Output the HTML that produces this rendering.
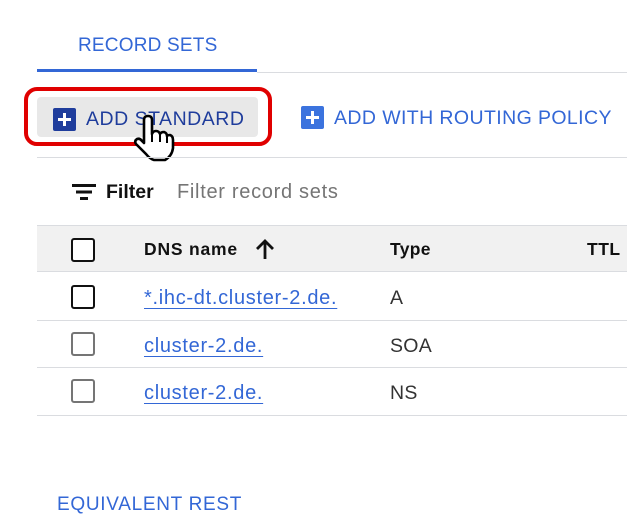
<!DOCTYPE html>
<html><head><meta charset="utf-8"><style>
*{margin:0;padding:0;box-sizing:border-box}
body{width:627px;height:520px;background:#fff;position:relative;overflow:hidden;font-family:"Liberation Sans",Arial,sans-serif}
.a{position:absolute;white-space:nowrap}
.blue{color:#3367d6}
.hl{position:absolute;height:1px;background:#dadce0}
.cb{position:absolute;width:24px;height:24px;border:2.5px solid #111;border-radius:3px;background:#fff}
.cb.g{border-color:#757575}
.lnk{color:#3367d6;text-decoration:underline;text-underline-offset:4px;text-decoration-thickness:1px;font-size:20px;letter-spacing:0.7px}
.t{font-size:19.5px;color:#333;letter-spacing:0.3px}
.plus{position:absolute;width:23px;height:23px;border-radius:2px}
.plus:before{content:"";position:absolute;left:5px;top:10px;width:13px;height:3px;background:#fff}
.plus:after{content:"";position:absolute;left:10px;top:5px;width:3px;height:13px;background:#fff}
</style></head><body>
<div class="a blue" style="left:78px;top:35px;font-size:19px;letter-spacing:0.2px">RECORD SETS</div>
<div class="a" style="left:37px;top:69px;width:220px;height:3px;background:#3367d6"></div>
<div class="hl" style="left:257px;top:72px;width:370px"></div>

<div class="a" style="left:24px;top:87px;width:248px;height:59px;border:4px solid #e00000;border-radius:13px"></div>
<div class="a" style="left:37px;top:97px;width:221px;height:40px;background:#e8e8e8;border-radius:4px"></div>
<div class="plus" style="left:53px;top:108px;background:#1f3d9c"></div>
<div class="a" style="left:86px;top:108px;font-size:19.5px;color:#1f3d9c;letter-spacing:0.5px">ADD STANDARD</div>

<div class="plus" style="left:301px;top:106px;background:#3b73de"></div>
<div class="a blue" style="left:334px;top:107px;font-size:19.5px;letter-spacing:0.4px">ADD WITH ROUTING POLICY</div>

<svg class="a" style="left:128px;top:114px" width="50" height="50" viewBox="0 0 50 50">
<path d="M16 6 Q16 2 20 2 Q24 2 24 6 L24 20 Q25 17 28 17 Q31 17 32 20 Q33 18 36 18 Q39 19 39 22 Q40 21 42 21 Q45 22 45 26 L45 34 Q44 42 37 46 L26 46 Q22 45 18 40 L8 30 Q6 27 9 25 Q12 24 14 27 L16 29 Z" fill="#fff" stroke="#000" stroke-width="2.6" stroke-linejoin="round"/>
<path d="M24 20 L24 28 M32 20 L32 28 M39 22 L39 29" stroke="#000" stroke-width="2"/>
</svg>

<div class="hl" style="left:37px;top:157px;width:590px"></div>

<svg class="a" style="left:72px;top:183px" width="24" height="18"><rect x="0" y="1" width="24" height="3" fill="#111"/><rect x="4" y="7.5" width="16" height="3" fill="#111"/><rect x="8" y="14" width="8" height="3" fill="#111"/></svg>
<div class="a" style="left:106px;top:181px;font-size:19.5px;font-weight:bold;color:#111">Filter</div>
<div class="a" style="left:177px;top:181px;font-size:20px;color:#757575;letter-spacing:0.7px">Filter record sets</div>

<div class="a" style="left:37px;top:225px;width:590px;height:47px;background:#f1f1f1;border-top:1px solid #dadce0;border-bottom:1px solid #dadce0"></div>
<div class="cb" style="left:71px;top:238px"></div>
<div class="a" style="left:144px;top:239px;font-size:17.5px;font-weight:bold;color:#111;letter-spacing:0.8px">DNS name</div>
<svg class="a" style="left:255px;top:238px" width="20" height="22"><path d="M10 21 V3 M2 11 L10 3 L18 11" stroke="#111" stroke-width="2.8" fill="none"/></svg>
<div class="a" style="left:390px;top:239px;font-size:17.5px;font-weight:bold;color:#111;letter-spacing:0.3px">Type</div>
<div class="a" style="left:587px;top:239px;font-size:17.5px;font-weight:bold;color:#111;letter-spacing:0.5px">TTL</div>

<div class="cb" style="left:71px;top:285px"></div>
<div class="a lnk" style="left:144px;top:287px">*.ihc-dt.cluster-2.de.</div>
<div class="a t" style="left:390px;top:287px">A</div>
<div class="hl" style="left:37px;top:320px;width:590px"></div>

<div class="cb g" style="left:71px;top:332px"></div>
<div class="a lnk" style="left:144px;top:335px">cluster-2.de.</div>
<div class="a t" style="left:390px;top:335px">SOA</div>
<div class="hl" style="left:37px;top:367px;width:590px"></div>

<div class="cb g" style="left:71px;top:379px"></div>
<div class="a lnk" style="left:144px;top:382px">cluster-2.de.</div>
<div class="a t" style="left:390px;top:382px">NS</div>
<div class="hl" style="left:37px;top:415px;width:590px"></div>

<div class="a blue" style="left:57px;top:494px;font-size:19px;letter-spacing:0.7px">EQUIVALENT REST</div>
</body></html>
